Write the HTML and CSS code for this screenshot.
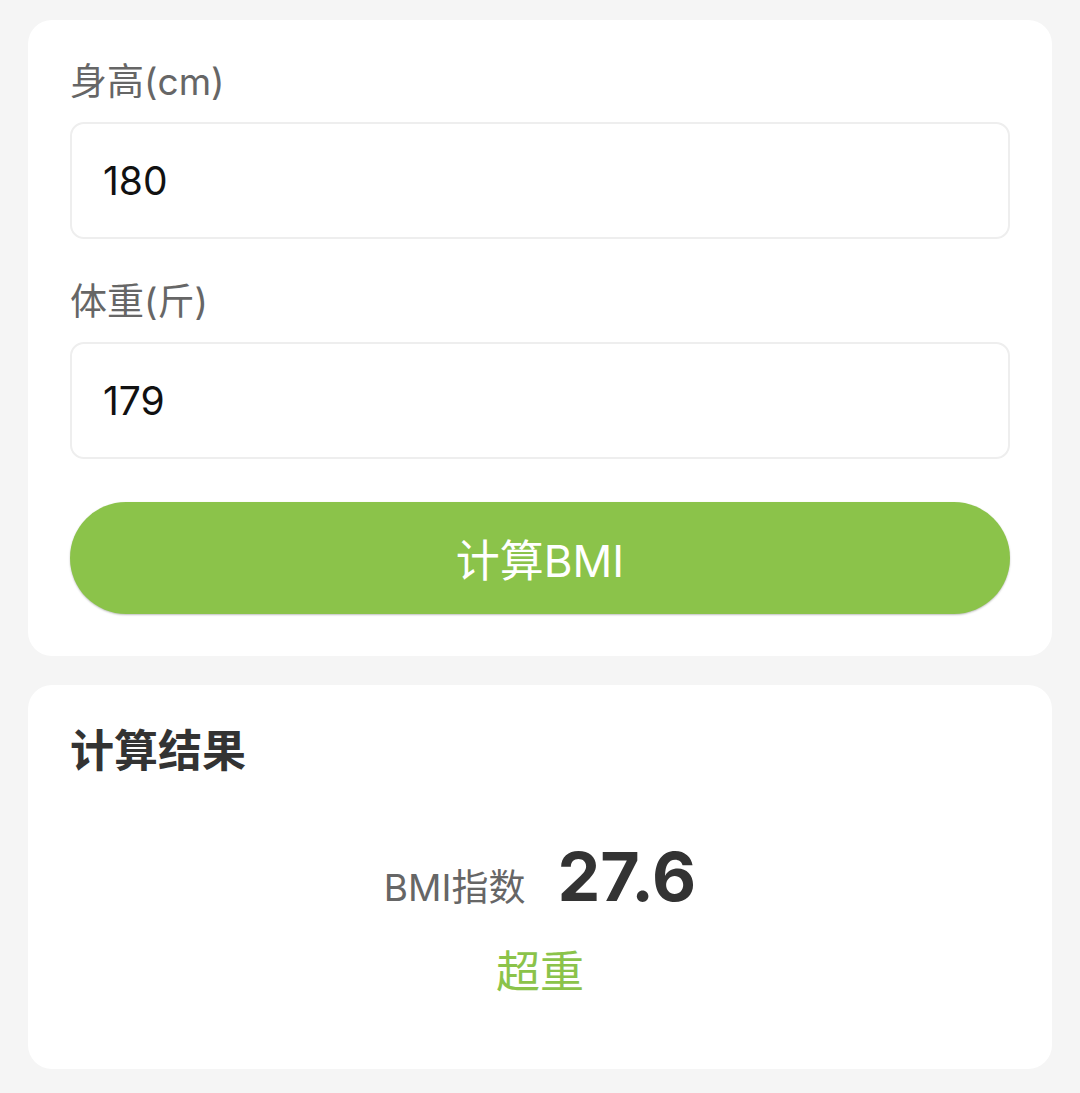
FILE: index.html
```html
<!DOCTYPE html>
<html lang="zh">
<head>
  <meta charset="UTF-8" />
  <meta name="viewport" content="width=device-width, initial-scale=1.0"/>
  <title>BMI计算</title>
  <link rel="stylesheet" href="styles.css">
</head>
<body>
  <div class="card form-card">
    <label class="field">
      <span>身高(cm)</span>
      <input type="number" id="height" value="180" />
    </label>

    <label class="field">
      <span>体重(斤)</span>
      <input type="number" id="weight" value="179" />
    </label>

    <button class="btn" id="calcBtn">计算BMI</button>
  </div>

  <div class="card result-card">
    <h3>计算结果</h3>
    <div class="bmi-row">
      <span class="bmi-label">BMI指数</span>
      <span class="bmi-value" id="bmi">27.6</span>
    </div>
    <div class="bmi-level" id="level">超重</div>
  </div>

  <script>
    function calculate() {
      const h = parseFloat(document.getElementById('height').value) || 0;
      const w = parseFloat(document.getElementById('weight').value) || 0;
      if (!h || !w) return;
      const m = h / 100;
      const bmi = (w / 2) / (m * m);
      let level = '正常';
      if (bmi < 18.5) level = '偏瘦';
      else if (bmi >= 28) level = '肥胖';
      else if (bmi >= 24) level = '超重';
      document.getElementById('bmi').textContent = bmi.toFixed(1);
      document.getElementById('level').textContent = level;
    }

    document.getElementById('calcBtn').addEventListener('click', calculate);
    calculate();
  </script>
</body>
</html>
```

FILE: styles.css
```css
body {
  margin: 0;
  padding: 20px 28px;
  background: #f5f5f5;
  font-family: Inter, "Noto Sans CJK SC", sans-serif;
}
.card {
  background: #fff;
  border-radius: 24px;
  padding: 38px 42px 42px;
}
.field {
  display: block;
  margin-bottom: 39px;
}
.field > span {
  display: block;
  font-size: 37px;
  line-height: 48px;
  color: #666;
  margin-bottom: 16px;
}
.field input {
  display: block;
  width: 100%;
  height: 117px;
  box-sizing: border-box;
  border: 2px solid #eee;
  border-radius: 14px;
  padding: 0 31px;
  font-family: inherit;
  font-size: 39px;
  color: #111;
  outline: none;
  -moz-appearance: textfield;
}
.field input::-webkit-outer-spin-button,
.field input::-webkit-inner-spin-button {
  -webkit-appearance: none;
  margin: 0;
}
.field:last-of-type {
  margin-bottom: 43px;
}
.btn {
  display: block;
  width: 100%;
  height: 112px;
  border: none;
  border-radius: 56px;
  background: #8bc34a;
  color: #fff;
  font-family: inherit;
  font-size: 44px;
  box-shadow: 0 1px 2px rgba(0, 0, 0, 0.25);
}
.result-card {
  margin-top: 29px;
  padding: 38px 42px 68px;
}
.result-card h3 {
  margin: 0;
  font-size: 44px;
  line-height: 56px;
  font-weight: bold;
  color: #333;
}
.bmi-row {
  display: flex;
  justify-content: center;
  align-items: baseline;
  gap: 32px;
  margin-top: 56px;
}
.bmi-label {
  font-size: 37px;
  color: #666;
}
.bmi-value {
  font-size: 68px;
  font-weight: bold;
  color: #333;
}
.bmi-level {
  text-align: center;
  font-size: 44px;
  color: #8bc34a;
  margin-top: 20px;
}
```
